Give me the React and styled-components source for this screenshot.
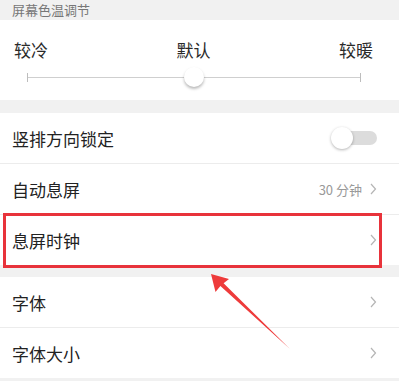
import React from 'react';
import styled, { createGlobalStyle } from 'styled-components';

const GlobalStyle = createGlobalStyle`
  html, body {
    margin: 0;
    padding: 0;
    background: #f1f1f1;
  }
  body {
    font-family: "Noto Sans CJK SC", "Noto Sans", sans-serif;
  }
`

const Page = styled.div`
  position: relative;
  width: 399px;
  height: 381px;
  overflow: hidden;
  background: #f1f1f1;
`

const SectionTitle = styled.div`
  height: 20px;
  padding-left: 12px;
  font-size: 13px;
  line-height: 20px;
  color: #777;
`

const Panel = styled.div`
  background: #fff;
  margin-bottom: ${p => p.$gap || 0}px;
`

const TempBox = styled.div`
  height: 80px;
  padding: 0 0 0 14px;
  box-sizing: border-box;
`

const Labels = styled.div`
  display: flex;
  justify-content: space-between;
  align-items: center;
  height: 55px;
  padding: 3px 26px 0 0;
  box-sizing: border-box;
  font-size: 17px;
  color: #2a2a2a;
`

const Track = styled.div`
  position: relative;
  margin: 2px 0 0 13px;
  width: 334px;
  height: 1px;
  background: #cfcfcf;
  &::before, &::after {
    content: "";
    position: absolute;
    top: -4px;
    width: 1px;
    height: 9px;
    background: #bdbdbd;
  }
  &::before { left: 0; }
  &::after { right: 0; }
`

const Knob = styled.div`
  position: absolute;
  left: 50%;
  top: -10px;
  width: 20px;
  height: 20px;
  margin-left: -10px;
  border-radius: 50%;
  background: #fff;
  box-shadow: 0 2px 3px rgba(0, 0, 0, 0.28);
`

const Row = styled.div`
  position: relative;
  display: flex;
  align-items: center;
  height: 50px;
  padding: 0 22px 0 12px;
  font-size: 17px;
  color: #222;
  & + & {
    border-top: 1px solid #ececec;
    margin-left: ${p => (p.$flush ? 0 : 10)}px;
    padding-left: ${p => (p.$flush ? 12 : 2)}px;
  }
`

const RowLabel = styled.span`
  flex: 1;
`

const Value = styled.span`
  font-size: 13px;
  color: #999;
  margin-right: 8px;
`

const Chevron = () => (
  <svg width="7" height="12" viewBox="0 0 7 12">
    <path d="M1 1 L5.5 6 L1 11" fill="none" stroke="#b5b5b5" strokeWidth="1.2" />
  </svg>
)

const Switch = styled.div`
  position: relative;
  width: 42px;
  height: 14px;
  border-radius: 7px;
  background: #dcdcdc;
  &::after {
    content: "";
    position: absolute;
    left: -4px;
    top: -4px;
    width: 22px;
    height: 22px;
    border-radius: 50%;
    background: #fff;
    box-shadow: 0 1px 3px rgba(0, 0, 0, 0.3);
  }
`

const Highlight = styled.div`
  position: absolute;
  left: 3px;
  top: -2px;
  width: 379px;
  bottom: -3px;
  box-sizing: border-box;
  border: 3px solid #e8333b;
  pointer-events: none;
`

const ArrowLayer = styled.svg`
  position: absolute;
  left: 0;
  top: 0;
  pointer-events: none;
`

const App = () => {
  return (
    <Page>
      <GlobalStyle />
      <SectionTitle>屏幕色温调节</SectionTitle>
      <Panel $gap={13}>
        <TempBox>
          <Labels>
            <span>较冷</span>
            <span>默认</span>
            <span>较暖</span>
          </Labels>
          <Track>
            <Knob />
          </Track>
        </TempBox>
      </Panel>
      <Panel $gap={12}>
        <Row>
          <RowLabel>竖排方向锁定</RowLabel>
          <Switch />
        </Row>
        <Row>
          <RowLabel>自动息屏</RowLabel>
          <Value>30 分钟</Value>
          <Chevron />
        </Row>
        <Row $flush>
          <RowLabel>息屏时钟</RowLabel>
          <Chevron />
          <Highlight />
        </Row>
      </Panel>
      <Panel>
        <Row>
          <RowLabel>字体</RowLabel>
          <Chevron />
        </Row>
        <Row>
          <RowLabel>字体大小</RowLabel>
          <Chevron />
        </Row>
      </Panel>
      <ArrowLayer width="399" height="381" viewBox="0 0 399 381">
        <polygon
          points="211,274 229,279 223.6,283.2 290,349 220.4,286 215.5,292"
          fill="#ee3b3b"
        />
      </ArrowLayer>
    </Page>
  );
}

export default App;
